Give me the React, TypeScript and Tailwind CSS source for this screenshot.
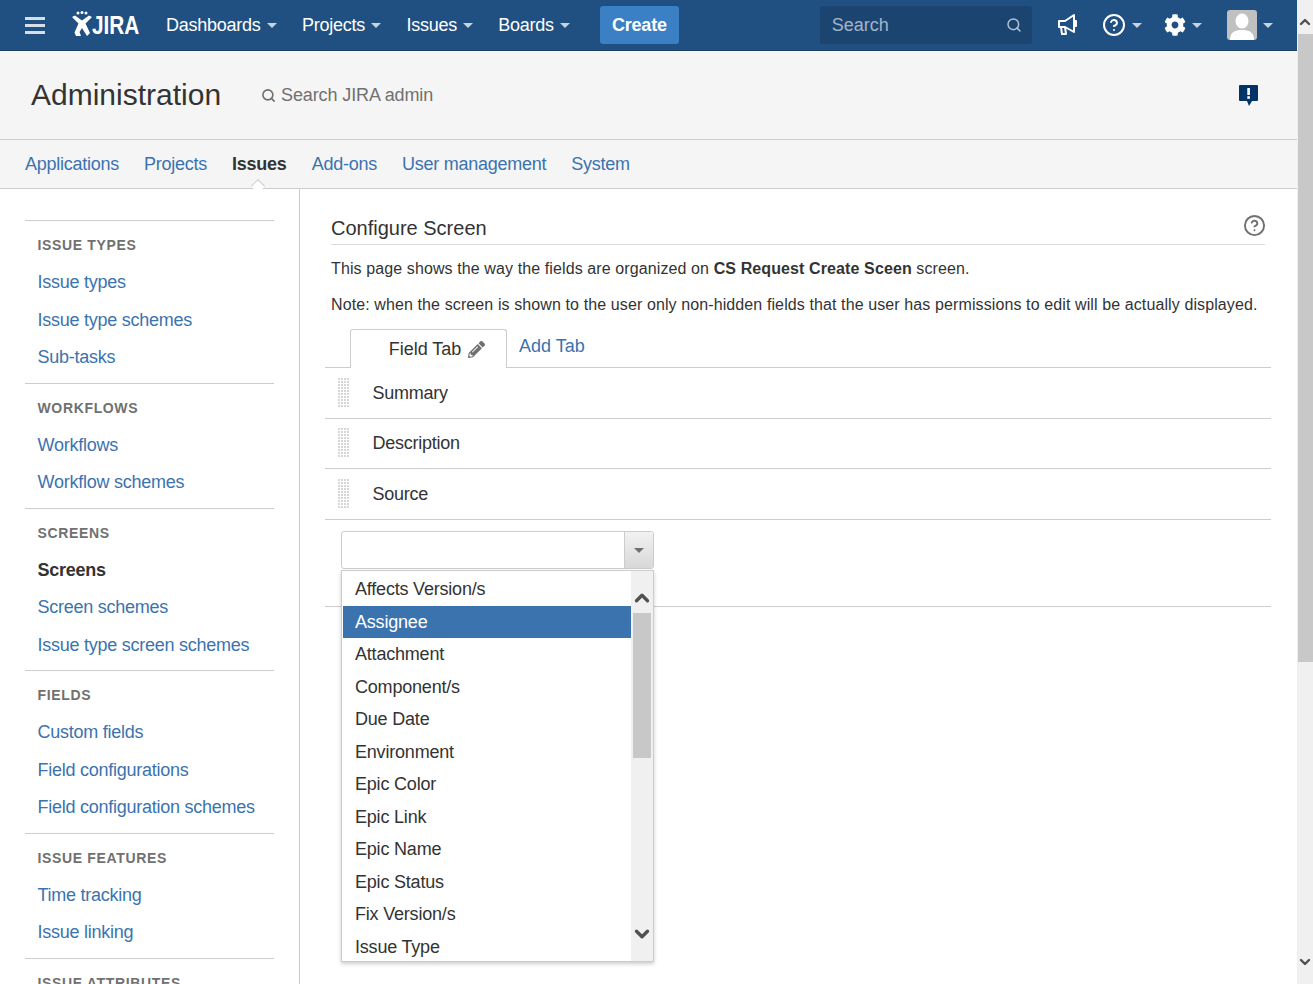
import React from "react";
import { FaCog, FaPencilAlt } from "react-icons/fa";
import { CircleHelp, Search, ChevronUp, ChevronDown } from "lucide-react";

const sections: { title: string; items: string[]; active?: string }[] = [
  { title: "Issue Types", items: ["Issue types", "Issue type schemes", "Sub-tasks"] },
  { title: "Workflows", items: ["Workflows", "Workflow schemes"] },
  { title: "Screens", items: ["Screens", "Screen schemes", "Issue type screen schemes"], active: "Screens" },
  { title: "Fields", items: ["Custom fields", "Field configurations", "Field configuration schemes"] },
  { title: "Issue Features", items: ["Time tracking", "Issue linking"] },
  { title: "Issue Attributes", items: ["Statuses"] },
];

const options = ["Affects Version/s", "Assignee", "Attachment", "Component/s", "Due Date", "Environment", "Epic Color", "Epic Link", "Epic Name", "Epic Status", "Fix Version/s", "Issue Type"];

function Caret({ className = "" }: { className?: string }) {
  return <span className={`inline-block w-0 h-0 border-x-[5px] border-x-transparent border-t-[5px] border-t-[#c8d3e0] ${className}`} />;
}

function TopLink({ label }: { label: string }) {
  return (
    <span className="flex items-center gap-[6px] text-[18px] text-white tracking-[-0.25px]">
      {label}
      <Caret />
    </span>
  );
}

function Logo() {
  return (
    <span className="flex w-[67px] items-center text-white">
      <svg width="20" height="26" viewBox="0 0 20 26" fill="white" className="shrink-0 -mt-[2px]">
        <circle cx="6" cy="2" r="1.5" />
        <circle cx="10" cy="1.5" r="1.5" />
        <circle cx="14" cy="2" r="1.5" />
        <path d="M0 6l3-1.5 7 5 7-5L20 6l-6.5 6.5L18 22l-3 3-5-8-2.5 4 1.5 4H4l-1.5-3.5L6.5 12.500z" />
      </svg>
      <span className="inline-block origin-left scale-x-[0.8] whitespace-nowrap text-[26px] font-bold leading-none">JIRA</span>
    </span>
  );
}

function DragHandle() {
  const dots = [];
  for (let y = 0; y < 10; y++) for (let x = 0; x < 4; x++) dots.push(<rect key={`${x}-${y}`} x={x * 3} y={y * 3} width="2" height="2" fill="#d6d6d6" />);
  return <svg width="11" height="29" viewBox="0 0 11 29" className="mb-[2px] shrink-0">{dots}</svg>;
}

function FieldRow({ label, h }: { label: string; h: string }) {
  return (
    <div className={`flex items-center ${h} border-b border-[#cccccc] pl-[13px]`}>
      <DragHandle />
      <span className="ml-[23.5px] text-[18px] tracking-[-0.25px] text-[#333333]">{label}</span>
    </div>
  );
}

export default function App() {
  return (
    <div className="flex h-[984px] w-[1313px] overflow-hidden bg-white font-['Liberation_Sans',Arial,sans-serif] text-[#333333]">
      <div className="flex w-[1297px] shrink-0 flex-col">
        {/* Top bar */}
        <header className="flex h-[51px] shrink-0 items-center bg-[#205081] border-b border-[#1c3f63] pl-[25px]">
          <span className="flex w-[20px] flex-col gap-[4px]">
            <span className="h-[3px] bg-[#d5dfe9]" />
            <span className="h-[3px] bg-[#d5dfe9]" />
            <span className="h-[3px] bg-[#d5dfe9]" />
          </span>
          <span className="ml-[27px]"><Logo /></span>
          <nav className="ml-[27px] flex items-center gap-[25.4px]">
            <TopLink label="Dashboards" />
            <TopLink label="Projects" />
            <TopLink label="Issues" />
            <TopLink label="Boards" />
          </nav>
          <button className="ml-[30px] h-[38px] w-[79px] rounded-[3px] bg-[#3b7fc4] text-[18px] font-bold tracking-[-0.2px] text-white">Create</button>
          <div className="ml-[141px] flex h-[38px] w-[212px] items-center justify-between rounded-[3px] bg-[#1b4470] pl-[12px] pr-[10px]">
            <span className="text-[18px] text-[#a3b5c8]">Search</span>
            <Search size={16} color="#b5c3d2" strokeWidth={2.2} />
          </div>
          <svg className="ml-[25px]" width="21" height="24" viewBox="0 0 21 24" fill="none" stroke="white" strokeWidth="2" strokeLinejoin="round">
            <path d="M2 8h6l9-6v17l-9-5H2z" />
            <path d="M4 14l1 7h4l-1-7" />
            <path d="M17 8h2v5h-2" />
          </svg>
          <span className="ml-[24px] flex items-center gap-[6px]">
            <CircleHelp size={24} color="white" strokeWidth={2} />
            <Caret />
          </span>
          <span className="ml-[22px] flex items-center gap-[6px]">
            <FaCog size={22} color="white" />
            <Caret />
          </span>
          <span className="ml-[25px] flex items-center gap-[6px]">
            <span className="flex h-[30px] w-[30px] overflow-hidden rounded-[3px] bg-[#c0c0c0]">
              <svg width="30" height="30" viewBox="0 0 30 30" fill="white">
                <ellipse cx="15" cy="11" rx="6.5" ry="7.5" />
                <path d="M3 30c0-8 5-10 12-10s12 2 12 10z" />
              </svg>
            </span>
            <Caret />
          </span>
        </header>

        {/* Administration header */}
        <div className="flex h-[89px] shrink-0 items-center bg-[#f5f5f5] border-b border-[#cccccc] pl-[31px] pr-[38px]">
          <h1 className="text-[30px] font-normal leading-none">Administration</h1>
          <Search className="ml-[40px]" size={15} color="#707070" strokeWidth={2.6} />
          <span className="ml-[5px] text-[18px] tracking-[-0.12px] text-[#707070]">Search JIRA admin</span>
          <svg className="ml-auto" width="21" height="23" viewBox="0 0 21 23">
            <path d="M2 1h17a1 1 0 0 1 1 1v14a1 1 0 0 1-1 1h-5l-3 5-2-5H2a1 1 0 0 1-1-1V2a1 1 0 0 1 1-1z" fill="#003366" />
            <rect x="9.300" y="4" width="2.600" height="7" fill="white" />
            <rect x="9.300" y="12.200" width="2.600" height="2.600" fill="white" />
          </svg>
        </div>

        {/* Admin nav */}
        <nav className="relative flex h-[49px] shrink-0 items-center gap-[25px] bg-[#f5f5f5] border-b border-[#cccccc] pl-[25px] pt-[1px] text-[18px] tracking-[-0.25px] text-[#3b73af]">
          <span>Applications</span>
          <span>Projects</span>
          <span className="font-bold text-[#333333]">Issues</span>
          <span>Add-ons</span>
          <span>User management</span>
          <span>System</span>
          <span className="absolute left-[253px] top-[41px] h-[10px] w-[10px] rotate-45 border-l border-t border-[#cccccc] bg-white" />
        </nav>

        <div className="relative z-0 flex min-h-0 flex-1">
          {/* Sidebar */}
          <aside className="w-[300px] shrink-0 border-r border-[#cccccc] px-[25px] pt-[31px]">
            {sections.map((s) => (
              <div key={s.title} className="w-[249px] border-t border-[#cccccc] pb-[7px]">
                <h3 className="flex h-[42px] items-center pl-[12.5px] pt-[7px] text-[14px] font-bold uppercase tracking-[0.65px] text-[#707070]">{s.title}</h3>
                {s.items.map((i) => (
                  <div key={i} className={`flex h-[37.5px] items-center pl-[12.5px] pt-[2px] text-[18px] tracking-[-0.25px] ${i === s.active ? "font-bold text-[#333333]" : "text-[#3b73af]"}`}>{i}</div>
                ))}
              </div>
            ))}
          </aside>

          {/* Main */}
          <main className="relative min-w-0 flex-1 pl-[25px] pr-[26px] pt-[25px]">
            <div className="ml-[6px] mr-[6px] flex h-[31px] items-center justify-between border-b border-[#dddddd]">
              <h2 className="pb-[3px] text-[20px] font-normal leading-none">Configure Screen</h2>
              <CircleHelp className="mb-[8px] mr-[-1px]" size={23} color="#707070" strokeWidth={2} />
            </div>
            <p className="ml-[6px] mt-[14px] whitespace-nowrap text-[16px] leading-[20px] tracking-[0.107px]">
              This page shows the way the fields are organized on <b>CS Request Create Sceen</b> screen.
            </p>
            <p className="ml-[6px] mt-[16px] whitespace-nowrap text-[16px] leading-[20px] tracking-[0.107px]">
              Note: when the screen is shown to the user only non-hidden fields that the user has permissions to edit will be actually displayed.
            </p>
            <div className="mt-[14px] flex h-[39px] items-start border-b border-[#cccccc] pl-[25px]">
              <div className="flex h-[39px] w-[157px] items-center justify-center gap-[7px] rounded-t-[3px] border-x border-t border-[#cccccc] bg-white pl-[17px] pt-[1px] text-[18px]">
                Field Tab <FaPencilAlt size={17} color="#707070" />
              </div>
              <span className="ml-[12px] pt-[4px] text-[18px] text-[#3b73af]">Add Tab</span>
            </div>
            <FieldRow label="Summary" h="h-[51px]" />
            <FieldRow label="Description" h="h-[50px]" />
            <FieldRow label="Source" h="h-[51px]" />
            <div className="h-[87px] border-b border-[#cccccc] pl-[16px] pt-[11px]">
              <div className="flex h-[38px] w-[313px] overflow-hidden rounded-[3px] border border-[#cccccc] bg-white">
                <span className="flex-1" />
                <span className="flex w-[29px] items-center justify-center border-l border-[#cccccc] bg-gradient-to-b from-[#f2f2f2] to-[#d8d8d8]">
                  <span className="h-0 w-0 border-x-[5px] border-t-[5px] border-x-transparent border-t-[#707070]" />
                </span>
              </div>
            </div>

            {/* Dropdown list */}
            <div className="absolute left-[41px] top-[381px] flex h-[392px] w-[313px] overflow-hidden border border-[#cccccc] bg-white shadow-[0_2px_4px_rgba(0,0,0,0.2)]">
              <ul className="w-[289px] pl-[1px] pt-[2.4px]">
                {options.map((o) => (
                  <li key={o} className={`flex h-[32.5px] items-center pl-[12px] text-[18px] tracking-[-0.2px] ${o === "Assignee" ? "bg-[#3b73af] text-white" : "text-[#333333]"}`}>{o}</li>
                ))}
              </ul>
              <div className="relative flex-1 bg-[#f0f0f0]">
                <ChevronUp className="absolute left-0 top-[16px]" size={22} color="#505050" strokeWidth={3.6} />
                <div className="absolute left-[2px] top-[42px] h-[145px] w-[18px] bg-[#c8c8c8]" />
                <ChevronDown className="absolute left-0 top-[352px]" size={22} color="#505050" strokeWidth={3.6} />
              </div>
            </div>
          </main>
        </div>
      </div>

      {/* Page scrollbar */}
      <div className="relative flex-1 bg-[#f0f0f0]">
        <ChevronUp className="absolute left-0 top-[14px]" size={16} color="#505050" strokeWidth={3.6} />
        <div className="absolute left-[1px] top-[34px] h-[628px] w-[15px] bg-[#c8c8c8]" />
        <ChevronDown className="absolute left-0 top-[954px]" size={16} color="#505050" strokeWidth={3.6} />
      </div>
    </div>
  );
}
